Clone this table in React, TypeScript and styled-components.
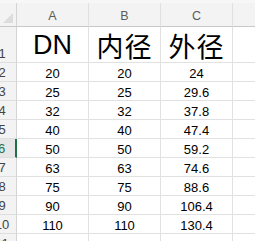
import { Fragment } from 'react';
import styled, { createGlobalStyle } from 'styled-components';

const GlobalStyle = createGlobalStyle`
  html, body {
    margin: 0;
    padding: 0;
    background: #ffffff;
    overflow: hidden;
  }
`;

const COLS = ['A', 'B', 'C'];

const rows: string[][] = [
  ['20', '20', '24'],
  ['25', '25', '29.6'],
  ['32', '32', '37.8'],
  ['40', '40', '47.4'],
  ['50', '50', '59.2'],
  ['63', '63', '74.6'],
  ['75', '75', '88.6'],
  ['90', '90', '106.4'],
  ['110', '110', '130.4'],
];

const ACTIVE_ROW = 6;

const TopStrip = styled.div`
  height: 3px;
  background: #f7f7f7;
`;

const Sheet = styled.div`
  display: grid;
  grid-template-columns: 29px 72px 72px 72px 60px;
  grid-template-rows: 24px 36px;
  grid-auto-rows: 19px;
  margin-left: -12px;
  font-family: 'Liberation Sans', Arial, sans-serif;
`;

const Corner = styled.div`
  position: relative;
  background: #f3f3f3;
  border-right: 1px solid #d4d4d4;
  border-bottom: 1px solid #c8c8c8;
  box-sizing: border-box;

  &::after {
    content: '';
    position: absolute;
    right: 3px;
    bottom: 3px;
    width: 0;
    height: 0;
    border-left: 10px solid transparent;
    border-bottom: 10px solid #dcdcdc;
  }
`;

const ColHead = styled.div`
  display: flex;
  align-items: center;
  justify-content: center;
  background: #f3f3f3;
  color: #5a5a5a;
  font-size: 12.5px;
  border-right: 1px solid #e0e0e0;
  border-bottom: 1px solid #c8c8c8;
  box-sizing: border-box;
  padding-top: 2px;
`;

const RowHead = styled.div<{ $active?: boolean }>`
  display: flex;
  align-items: flex-end;
  justify-content: center;
  background: ${p => (p.$active ? '#e6e6e6' : '#f3f3f3')};
  color: ${p => (p.$active ? '#1e7145' : '#444444')};
  font-size: 13px;
  line-height: 17px;
  box-sizing: border-box;
  border-bottom: 1px solid #dedede;
  border-right: ${p => (p.$active ? '2px solid #1e7145' : '1px solid #d4d4d4')};
`;

const Cell = styled.div`
  display: flex;
  align-items: flex-end;
  justify-content: center;
  color: #000000;
  font-size: 13px;
  line-height: 15px;
  white-space: nowrap;
  overflow: hidden;
  box-sizing: border-box;
  border-right: 1px solid #e1e1e1;
  border-bottom: 1px solid #e1e1e1;
`;

const TitleCell = styled(Cell)`
  font-family: 'Liberation Sans Narrow', 'Liberation Sans', 'Noto Sans CJK SC', sans-serif;
  font-size: 27px;
  line-height: 32px;
  padding-bottom: 1px;
`;

const CjkTitle = styled(TitleCell)`
  font-family: 'Noto Sans CJK SC', sans-serif;
  font-size: 27px;
  letter-spacing: 1px;
  line-height: 32px;
  padding-bottom: 0;
`;

export default function App() {
  return (
    <>
      <GlobalStyle />
      <TopStrip />
      <Sheet>
        <Corner />
        {COLS.map(c => (
          <ColHead key={c}>{c}</ColHead>
        ))}
        <ColHead />

        <RowHead>1</RowHead>
        <TitleCell>DN</TitleCell>
        <CjkTitle>内径</CjkTitle>
        <CjkTitle>外径</CjkTitle>
        <Cell />

        {rows.map((r, i) => (
          <Fragment key={i}>
            <RowHead $active={i + 2 === ACTIVE_ROW}>{i + 2}</RowHead>
            {r.map((v, j) => (
              <Cell key={j}>{v}</Cell>
            ))}
            <Cell />
          </Fragment>
        ))}

        <RowHead>11</RowHead>
        <Cell />
        <Cell />
        <Cell />
        <Cell />
      </Sheet>
    </>
  );
}
